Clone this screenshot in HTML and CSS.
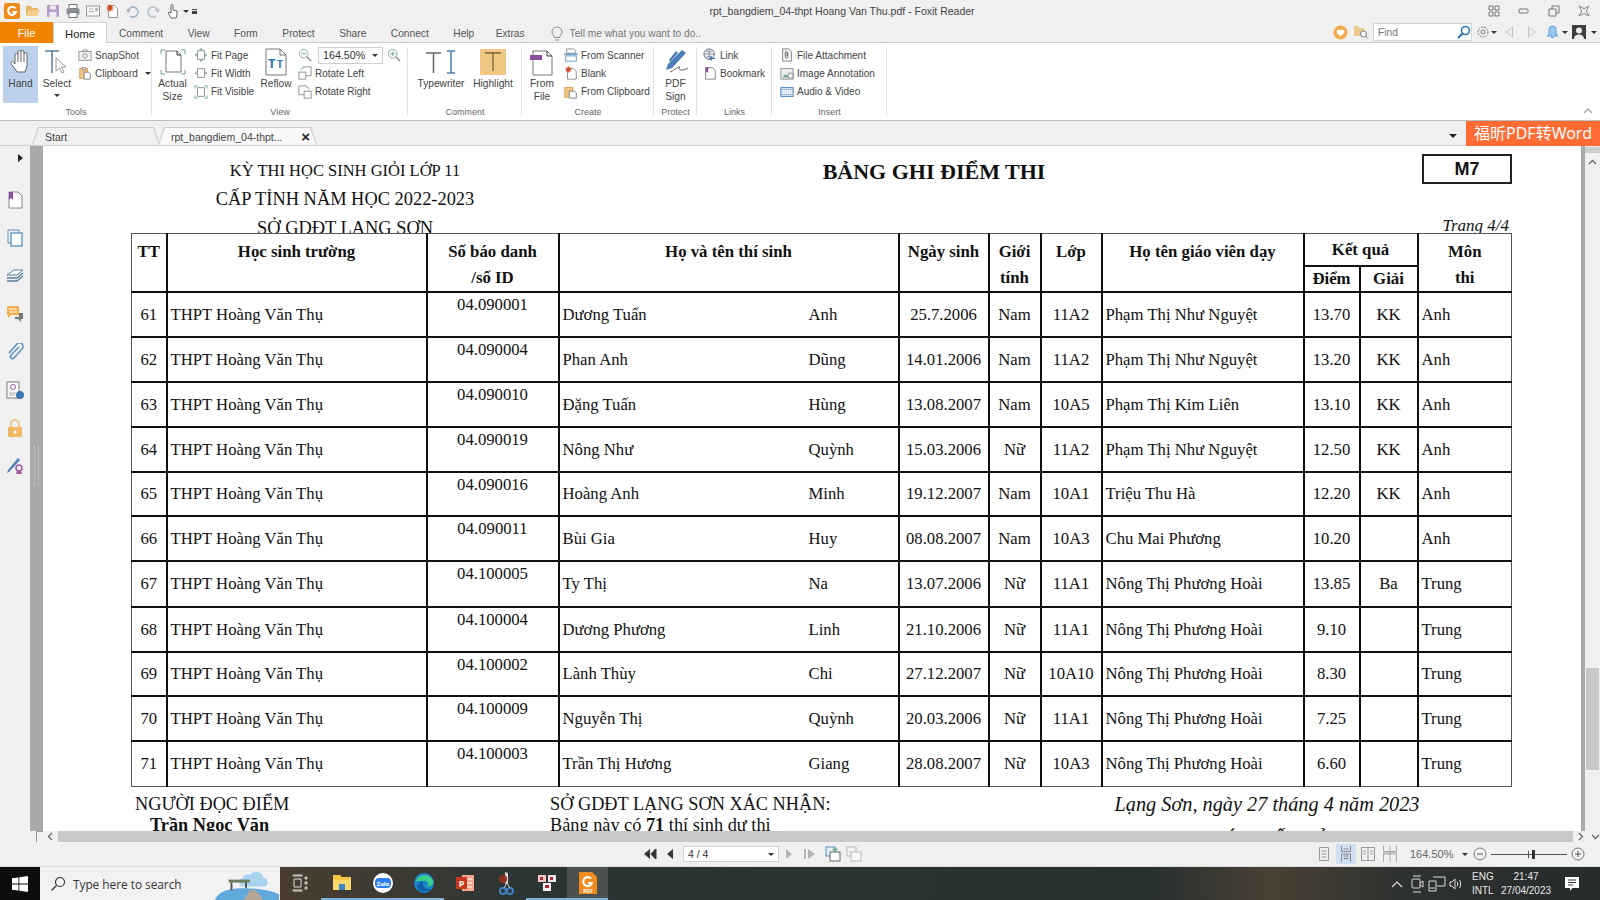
FILE: index.html
```html
<!DOCTYPE html>
<html lang="vi">
<head>
    <meta charset="UTF-8">
    <title>rpt_bangdiem_04-thpt Hoang Van Thu.pdf - Foxit Reader</title>
    <link rel="stylesheet" href="styles.css">
</head>
<body>

    <!-- Title bar -->
    <header class="titlebar">
        <div class="quick">
            <span class="q q-logo"><svg width="18" height="18" viewBox="0 0 18 18"><rect x="1" y="1" width="16" height="16" rx="2" fill="#f08a1d"/><path d="M12.5 6.5A4 4 0 1 0 13 10H9.5" fill="none" stroke="#fff" stroke-width="2.2"/></svg></span>
            <span class="q"><svg width="16" height="16" viewBox="0 0 16 16"><path d="M1 3h5l1 2h6v2H4L1 13z" fill="#e8b765"/><path d="M4 7h11l-3 6H1z" fill="#f3cf8f"/></svg></span>
            <span class="q"><svg width="16" height="16" viewBox="0 0 16 16"><rect x="2" y="2" width="12" height="12" rx="1" fill="#b79ac9"/><rect x="5" y="2.5" width="6" height="4" fill="#efe9f3"/><rect x="4.5" y="9" width="7" height="5" fill="#efe9f3"/></svg></span>
            <span class="q"><svg width="16" height="16" viewBox="0 0 16 16"><rect x="4" y="1.5" width="8" height="4" fill="#fff" stroke="#777"/><rect x="1.5" y="5.5" width="13" height="6" rx="1" fill="#8a8f96"/><rect x="4" y="9.5" width="8" height="5" fill="#fff" stroke="#777"/></svg></span>
            <span class="q"><svg width="16" height="16" viewBox="0 0 16 16"><rect x="1.5" y="3" width="13" height="10" fill="#f7f7f7" stroke="#999"/><path d="M4 6h4M4 8.5h5" stroke="#aaa"/><rect x="10" y="5" width="3" height="3" fill="#b9b9b9"/></svg></span>
            <span class="q"><svg width="16" height="16" viewBox="0 0 16 16"><path d="M3.5 2.5h6l3 3v9h-9z" fill="#fff" stroke="#999"/><path d="M5 1l1 2 2-1-1 2 2 1-2 1 1 2-2-1-1 2-1-2-2 1 1-2-2-1 2-1-1-2 2 1z" fill="#d8482b"/></svg></span>
            <span class="q"><svg width="16" height="16" viewBox="0 0 16 16"><path d="M3 9a5 5 0 1 1 2 4" fill="none" stroke="#a9b6c6" stroke-width="1.6"/><path d="M1 6l2 4 3-3z" fill="#a9b6c6"/></svg></span>
            <span class="q"><svg width="16" height="16" viewBox="0 0 16 16"><path d="M13 9a5 5 0 1 0-2 4" fill="none" stroke="#b9c3cf" stroke-width="1.6"/><path d="M15 6l-2 4-3-3z" fill="#b9c3cf"/></svg></span>
            <span class="q"><svg width="16" height="16" viewBox="0 0 16 16"><path d="M6 8V2.5a1 1 0 0 1 2 0V7l4 1v4l-1 3H6L3 10l1-1 2 1z" fill="#fff" stroke="#666"/></svg></span>
            <span class="caret"></span>
            <span class="qmore"></span>
        </div>
        <div class="doc-title">rpt_bangdiem_04-thpt Hoang Van Thu.pdf - Foxit Reader</div>
        <div class="winbtns">
            <svg width="14" height="14" viewBox="0 0 14 14"><path d="M2 2h4v4H2zM8 2h4v4H8zM2 8h4v4H2zM8 8h4v4H8z" fill="none" stroke="#777"/></svg>
            <svg width="14" height="14" viewBox="0 0 14 14"><rect x="2" y="5" width="9" height="4" rx="1" fill="none" stroke="#777"/></svg>
            <svg width="14" height="14" viewBox="0 0 14 14"><path d="M2 5h7v7H2zM5 5V2h7v7H9" fill="none" stroke="#777"/></svg>
            <svg width="14" height="14" viewBox="0 0 14 14"><path d="M2 2l4 2 1 1 1-1 4-2-2 4-1 1 1 1 2 4-4-2-1-1-1 1-4 2 2-4 1-1-1-1z" fill="none" stroke="#888"/></svg>
        </div>
    </header>

    <!-- Menu tabs -->
    <nav class="menubar">
        <a class="m-file">File</a>
        <a class="m-home">Home</a>
        <a class="m-item">Comment</a>
        <a class="m-item">View</a>
        <a class="m-item">Form</a>
        <a class="m-item">Protect</a>
        <a class="m-item">Share</a>
        <a class="m-item">Connect</a>
        <a class="m-item">Help</a>
        <a class="m-item m-extras">Extras</a>
        <span class="tell">
            <svg width="14" height="16" viewBox="0 0 14 16"><path d="M4.500 11.500C4 9 2 8.500 2 6a5 5 0 0 1 10 0c0 2.500-2 3-2.500 5.500zM5 14h4" fill="none" stroke="#888"/></svg>
            Tell me what you want to do..
        </span>
        <div class="menu-right">
            <svg class="mr-heart" width="15" height="15" viewBox="0 0 15 15"><circle cx="7.500" cy="7.500" r="7" fill="#f0ab4a"/><path d="M7.500 11.500L4 8a2 2 0 0 1 3.500-2.500A2 2 0 0 1 11 8z" fill="#fff"/></svg>
            <svg class="mr-folder" width="16" height="16" viewBox="0 0 16 16"><path d="M1 2h4l1 2h5v8H1z" fill="#ecc98e"/><circle cx="10.500" cy="10" r="3" fill="#fff" stroke="#777"/><path d="M12.500 12l2.500 2.500" stroke="#777"/></svg>
            <div class="find">Find<svg width="15" height="15" viewBox="0 0 15 15"><circle cx="9.500" cy="5.500" r="4" fill="none" stroke="#2c78b8" stroke-width="1.600"/><path d="M6.500 8.500L2 13" stroke="#2c78b8" stroke-width="2.200"/></svg></div>
            <svg class="mr-gear" width="14" height="14" viewBox="0 0 14 14"><circle cx="7" cy="7" r="5" fill="none" stroke="#777" stroke-dasharray="2 1"/><circle cx="7" cy="7" r="2" fill="none" stroke="#777"/></svg>
            <span class="caret"></span>
            <svg class="mr-prev" width="9" height="12" viewBox="0 0 9 12"><path d="M7.500 1v10L1 6z" fill="none" stroke="#c4c4c4"/></svg>
            <svg class="mr-next" width="9" height="12" viewBox="0 0 9 12"><path d="M1.500 1v10L8 6z" fill="none" stroke="#c4c4c4"/></svg>
            <svg class="mr-bell" width="13" height="14" viewBox="0 0 13 14"><path d="M6.500 1a3.500 3.500 0 0 0-3.500 3.500V9l-2 2h11l-2-2V4.500A3.500 3.500 0 0 0 6.500 1z" fill="#9cc7ec" stroke="#5a9bd4"/><path d="M5 12.500h3" stroke="#5a9bd4"/></svg>
            <span class="caret"></span>
            <svg class="mr-user" width="14" height="14" viewBox="0 0 14 14"><rect width="14" height="14" fill="#3d3d3d"/><circle cx="7" cy="5.500" r="3" fill="#eee"/><path d="M2 14c0-3 2-4.500 5-4.500s5 1.500 5 4.500z" fill="#eee"/></svg>
            <span class="caret"></span>
        </div>
    </nav>

    <!-- Ribbon -->
    <section class="ribbon">
        <div class="group g-tools">
            <div class="g-body">
                <div class="big big-hand">
                    <svg width="26" height="28" viewBox="0 0 26 28"><path d="M7 16V7a1.500 1.500 0 0 1 3 0V4a1.500 1.500 0 0 1 3 0v0a1.500 1.500 0 0 1 3 0v2a1.500 1.500 0 0 1 3 0v12l-2 6H9L3 15.500a1.500 1.500 0 0 1 2.500-1.500z" fill="#fff" stroke="#666"/><path d="M10 7v7M13 4v10M16 5v9" stroke="#666"/></svg>
                    <span>Hand</span>
                </div>
                <div class="big big-select">
                    <svg width="28" height="28" viewBox="0 0 28 28"><path d="M2 3h14M9 3v22" stroke="#5a7d9a" stroke-width="1.500"/><path d="M13 10v13l3.500-3 2.500 5 2-1-2.500-5H23z" fill="#fff" stroke="#999"/></svg>
                    <span>Select</span>
                    <i class="caret"></i>
                </div>
                <div class="col col-tools">
                    <div class="small"><svg viewBox="0 0 16 16"><rect x="1" y="4" width="14" height="10" fill="#f2f2f2" stroke="#888"/><path d="M5 4l1-2h4l1 2" fill="none" stroke="#888"/><circle cx="8" cy="9" r="2.500" fill="none" stroke="#888"/></svg>SnapShot</div>
                    <div class="small"><svg viewBox="0 0 16 16"><rect x="2" y="3" width="9" height="11" fill="#f0c686" stroke="#d69a3d"/><rect x="5" y="1.500" width="3" height="3" fill="#fff" stroke="#888"/><path d="M7 7h5l2 2v6H7z" fill="#fff" stroke="#777"/></svg>Clipboard<i class="caret caret-gap"></i></div>
                </div>
            </div>
            <div class="g-label">Tools</div>
        </div>

        <div class="group g-view">
            <div class="g-body">
                <div class="big big-actual">
                    <svg width="30" height="28" viewBox="0 0 30 28"><path d="M8 3h11l4 4v17H8z" fill="#fff" stroke="#777"/><path d="M19 3v4h4" fill="none" stroke="#333"/><path d="M3 6V2h4M27 6V2h-4M3 22v4h4M27 22v4h-4" fill="none" stroke="#6aa68a"/></svg>
                    <span>Actual<br>Size</span>
                </div>
                <div class="col col-fit">
                    <div class="small"><svg viewBox="0 0 16 16"><path d="M4 3h8v10H4z" fill="#fff" stroke="#888"/><path d="M8 0l2 2H6zM8 16l-2-2h4zM1 8l2-2v4zM15 8l-2 2V6z" fill="#6aa68a"/></svg>Fit Page</div>
                    <div class="small"><svg viewBox="0 0 16 16"><path d="M4 3h8v10H4z" fill="#fff" stroke="#888"/><path d="M1 8l2-2v4zM15 8l-2 2V6z" fill="#6aa68a"/></svg>Fit Width</div>
                    <div class="small"><svg viewBox="0 0 16 16"><path d="M4 3h8v10H4z" fill="#fff" stroke="#888"/><path d="M1 4V1h3M15 4V1h-3M1 12v3h3M15 12v3h-3" fill="none" stroke="#6aa68a"/></svg>Fit Visible</div>
                </div>
                <div class="big big-reflow">
                    <svg width="26" height="28" viewBox="0 0 26 28"><path d="M3 1h14l6 6v20H3z" fill="#fff" stroke="#777"/><path d="M17 1v6h6" fill="none" stroke="#777"/><text x="5" y="20" class="ic-t">T</text><text x="14" y="20" class="ic-t ic-t2">T</text></svg>
                    <span>Reflow</span>
                </div>
                <div class="col col-zoom">
                    <div class="zoomrow">
                        <svg viewBox="0 0 16 16"><circle cx="6.500" cy="6.500" r="5" fill="#f4f8f4" stroke="#8da89a"/><path d="M4 6.500h5" stroke="#6aa68a"/><path d="M10 10l5 5" stroke="#8a8a8a" stroke-width="1.500"/></svg>
                        <div class="combo">164.50%<i class="caret"></i></div>
                        <svg viewBox="0 0 16 16"><circle cx="6.500" cy="6.500" r="5" fill="#f4f8f4" stroke="#8da89a"/><path d="M4 6.500h5M6.500 4v5" stroke="#6aa68a"/><path d="M10 10l5 5" stroke="#8a8a8a" stroke-width="1.500"/></svg>
                    </div>
                    <div class="small"><svg viewBox="0 0 16 16"><path d="M6 1h9v10H9" fill="#fff" stroke="#888"/><rect x="1" y="7" width="8" height="8" fill="#fff" stroke="#888"/><path d="M3 5a4 4 0 0 1 4-3" fill="none" stroke="#6aa68a"/></svg>Rotate Left</div>
                    <div class="small"><svg viewBox="0 0 16 16"><path d="M10 1H1v10h6" fill="#fff" stroke="#888"/><rect x="7" y="7" width="8" height="8" fill="#fff" stroke="#888"/><path d="M13 5a4 4 0 0 0-4-3" fill="none" stroke="#6aa68a"/></svg>Rotate Right</div>
                </div>
            </div>
            <div class="g-label">View</div>
        </div>

        <div class="group g-comment">
            <div class="g-body">
                <div class="big big-type">
                    <svg width="36" height="28" viewBox="0 0 36 28"><path d="M3 5h15M10.500 5v20" stroke="#666" stroke-width="1.500"/><path d="M24 3h8M24 25h8M28 3v22" stroke="#4a7fb5" stroke-width="1.500"/></svg>
                    <span>Typewriter</span>
                </div>
                <div class="big big-high">
                    <svg width="28" height="28" viewBox="0 0 28 28"><rect x="1" y="1" width="26" height="26" fill="#f0c683"/><path d="M6 5h16M14 5v18" stroke="#7a6238" stroke-width="1.300"/></svg>
                    <span>Highlight</span>
                </div>
            </div>
            <div class="g-label">Comment</div>
        </div>

        <div class="group g-create">
            <div class="g-body">
                <div class="big big-file">
                    <svg width="24" height="28" viewBox="0 0 24 28"><path d="M3 3h14l5 5v19H3z" fill="#fff" stroke="#777"/><path d="M17 3v5h5" fill="none" stroke="#333"/><rect x="0" y="7" width="12" height="5" fill="#8a4fa0"/></svg>
                    <span>From<br>File</span>
                </div>
                <div class="col col-create">
                    <div class="small"><svg viewBox="0 0 16 16"><path d="M4 1h7l2 2v3H3V1z" fill="#fff" stroke="#888"/><path d="M0 7h16" stroke="#5a8fc0" stroke-width="1.500"/><rect x="2" y="9" width="12" height="6" fill="#fff" stroke="#5a8fc0"/></svg>From Scanner</div>
                    <div class="small"><svg viewBox="0 0 16 16"><path d="M4 3h7l3 3v9H4z" fill="#fff" stroke="#888"/><path d="M5 0l1 2 2-1-1 2 2 1-2 1 1 2-2-1-1 2-1-2-2 1 1-2-2-1 2-1-1-2 2 1z" fill="#d8482b"/></svg>Blank</div>
                    <div class="small"><svg viewBox="0 0 16 16"><rect x="1" y="3" width="9" height="11" fill="#f0c686" stroke="#d69a3d"/><path d="M6 7h6l2 2v6H6z" fill="#fff" stroke="#777"/></svg>From Clipboard</div>
                </div>
            </div>
            <div class="g-label">Create</div>
        </div>

        <div class="group g-protect">
            <div class="g-body">
                <div class="big big-sign">
                    <svg width="28" height="28" viewBox="0 0 28 28"><path d="M20 2l4 3L10 20l-6 2 2-6z" fill="#4a7fb5"/><path d="M14 3l2 2-8 9-1-2z" fill="#4a7fb5"/><path d="M8 24c4-1 6-5 10-5-2 2-1 3 2 3s4-1 6-2" fill="none" stroke="#666"/></svg>
                    <span>PDF<br>Sign</span>
                </div>
            </div>
            <div class="g-label">Protect</div>
        </div>

        <div class="group g-links">
            <div class="g-body">
                <div class="col">
                    <div class="small"><svg viewBox="0 0 16 16"><circle cx="7" cy="7" r="6" fill="#e8eef4" stroke="#667"/><path d="M1 7h12M7 1v12M3 3c3 2 5 2 8 0M3 11c3-2 5-2 8 0" fill="none" stroke="#667" stroke-width=".7"/><path d="M8 12h6M10 10l-2 2 2 2" fill="none" stroke="#3b78b5" stroke-width="1.300"/></svg>Link</div>
                    <div class="small"><svg viewBox="0 0 16 16"><path d="M3 2h8l3 3v10H3z" fill="#fff" stroke="#777"/><path d="M3 1h3v7L4.500 6.500 3 8z" fill="#8a4fa0"/></svg>Bookmark</div>
                </div>
            </div>
            <div class="g-label">Links</div>
        </div>

        <div class="group g-insert">
            <div class="g-body">
                <div class="col">
                    <div class="small"><svg viewBox="0 0 16 16"><path d="M3 1h7l3 3v11H3z" fill="#f6f6f6" stroke="#777"/><path d="M9 5v5a1.500 1.500 0 0 1-3 0V5a1 1 0 0 1 2 0v4" fill="none" stroke="#555"/></svg>File Attachment</div>
                    <div class="small"><svg viewBox="0 0 16 16"><rect x="1" y="3" width="14" height="12" fill="#e8eef0" stroke="#888"/><path d="M3 13l3-4 2 2 2-3 3 5z" fill="#6aa68a"/><circle cx="12" cy="11" r="3" fill="#fff" stroke="#777"/></svg>Image Annotation</div>
                    <div class="small"><svg viewBox="0 0 16 16"><rect x="1" y="3" width="14" height="10" fill="#e4edf5" stroke="#3b78b5"/><path d="M1 5h14M1 11h14" stroke="#3b78b5" stroke-dasharray="1 1"/></svg>Audio &amp; Video</div>
                </div>
            </div>
            <div class="g-label">Insert</div>
        </div>

        <svg class="ribbon-up" width="10" height="8" viewBox="0 0 10 8"><path d="M1 6l4-4 4 4" fill="none" stroke="#aaa" stroke-width="1.500"/></svg>
    </section>

    <!-- Document tabs -->
    <div class="tabrow">
        <div class="tab tab-start"><span>Start</span></div>
        <div class="tab tab-doc"><span>rpt_bangdiem_04-thpt...</span><b class="tab-x">×</b></div>
        <i class="tabs-drop"></i>
        <div class="promo">福昕PDF转Word</div>
    </div>

    <!-- Main area -->
    <main class="workspace">
        <aside class="sidebar">
            <i class="side-arrow"></i>
            <svg width="18" height="18" viewBox="0 0 18 18"><path d="M3 1h9l4 4v12H3z" fill="#fff" stroke="#888"/><path d="M3 1h4v8L5 7 3 9z" fill="#8a4fa0"/></svg>
            <svg width="18" height="18" viewBox="0 0 18 18"><path d="M2 1h11v3" fill="none" stroke="#5a8fc0"/><path d="M2 1v13h3" fill="none" stroke="#5a8fc0"/><rect x="5" y="4" width="11" height="13" fill="#fff" stroke="#5a8fc0" stroke-width="1.300"/></svg>
            <svg width="18" height="18" viewBox="0 0 18 18"><path d="M1 8l7-5h9l-6 5z" fill="#fff" stroke="#5a7d9a"/><path d="M1 11h10l6-5M1 14h10l6-5" fill="none" stroke="#5a7d9a" stroke-width="1.300"/></svg>
            <svg width="18" height="18" viewBox="0 0 18 18"><path d="M1 1h12v9H5l-3 3v-3H1z" fill="#f0b04f"/><path d="M3 4h8M3 7h8" stroke="#fff"/><path d="M13 8h4v6h-2v3l-3-3H9v-2h4z" fill="#777"/></svg>
            <svg width="18" height="18" viewBox="0 0 18 18"><path d="M13 4L5 12a2 2 0 0 0 3 3l8-9a3.500 3.500 0 0 0-5-5L3 10a5 5 0 0 0 0 0" fill="none" stroke="#5a8fc0" stroke-width="1.500"/></svg>
            <svg width="18" height="18" viewBox="0 0 18 18"><rect x="1" y="1" width="12" height="16" fill="#fff" stroke="#777"/><circle cx="7" cy="6" r="2.500" fill="none" stroke="#a0569b"/><path d="M3 12h7M3 14h6" stroke="#aaa"/><circle cx="14" cy="14" r="4" fill="#3b78b5"/></svg>
            <svg width="18" height="18" viewBox="0 0 18 18"><path d="M5 8V5a4 4 0 0 1 8 0v3" fill="none" stroke="#f0c078" stroke-width="1.600"/><rect x="2" y="8" width="14" height="10" rx="1" fill="#f0b860"/><circle cx="9" cy="13" r="1.500" fill="#fff"/></svg>
            <svg width="18" height="18" viewBox="0 0 18 18"><path d="M12 1l2 2-11 12-2 1 1-3z" fill="#4a7fb5"/><circle cx="13" cy="11" r="3" fill="none" stroke="#a0569b" stroke-width="1.500"/><path d="M11 14l-1 3h6l-1-3" fill="#a0569b"/></svg>
        </aside>
        <div class="strip strip-left"><span class="grip"></span></div>

        <div class="page">
            <div class="doc-head">
                <div class="head-left">
                    <div class="exam-name">KỲ THI HỌC SINH GIỎI LỚP 11</div>
                    <div>CẤP TỈNH NĂM HỌC 2022-2023</div>
                    <div>SỞ GDĐT LẠNG SƠN</div>
                </div>
                <h1 class="head-title">BẢNG GHI ĐIỂM THI</h1>
                <div class="head-right">
                    <div class="code">M7</div>
                    <div class="pageno">Trang 4/4</div>
                </div>
            </div>

            <table class="scores">
                <colgroup>
                    <col class="c-tt"><col class="c-school"><col class="c-id"><col class="c-name"><col class="c-dob">
                    <col class="c-sex"><col class="c-class"><col class="c-teacher"><col class="c-score"><col class="c-prize"><col class="c-sub">
                </colgroup>
                <thead>
                    <tr class="h1">
                        <th rowspan="2">TT</th>
                        <th rowspan="2">Học sinh trường</th>
                        <th rowspan="2">Số báo danh<br>/số ID</th>
                        <th rowspan="2">Họ và tên thí sinh</th>
                        <th rowspan="2">Ngày sinh</th>
                        <th rowspan="2">Giới<br>tính</th>
                        <th rowspan="2">Lớp</th>
                        <th rowspan="2">Họ tên giáo viên dạy</th>
                        <th colspan="2" class="th-mid">Kết quả</th>
                        <th rowspan="2">Môn<br>thi</th>
                    </tr>
                    <tr class="h2">
                        <th class="th-mid">Điểm</th>
                        <th class="th-mid">Giải</th>
                    </tr>
                </thead>
                <tbody>
                    <tr><td>61</td><td class="l">THPT Hoàng Văn Thụ</td><td class="sbd">04.090001</td><td class="l"><div class="fullname"><span>Dương Tuấn</span><span>Anh</span></div></td><td>25.7.2006</td><td>Nam</td><td>11A2</td><td class="l">Phạm Thị Như Nguyệt</td><td>13.70</td><td>KK</td><td class="l">Anh</td></tr>
                    <tr><td>62</td><td class="l">THPT Hoàng Văn Thụ</td><td class="sbd">04.090004</td><td class="l"><div class="fullname"><span>Phan Anh</span><span>Dũng</span></div></td><td>14.01.2006</td><td>Nam</td><td>11A2</td><td class="l">Phạm Thị Như Nguyệt</td><td>13.20</td><td>KK</td><td class="l">Anh</td></tr>
                    <tr><td>63</td><td class="l">THPT Hoàng Văn Thụ</td><td class="sbd">04.090010</td><td class="l"><div class="fullname"><span>Đặng Tuấn</span><span>Hùng</span></div></td><td>13.08.2007</td><td>Nam</td><td>10A5</td><td class="l">Phạm Thị Kim Liên</td><td>13.10</td><td>KK</td><td class="l">Anh</td></tr>
                    <tr><td>64</td><td class="l">THPT Hoàng Văn Thụ</td><td class="sbd">04.090019</td><td class="l"><div class="fullname"><span>Nông Như</span><span>Quỳnh</span></div></td><td>15.03.2006</td><td>Nữ</td><td>11A2</td><td class="l">Phạm Thị Như Nguyệt</td><td>12.50</td><td>KK</td><td class="l">Anh</td></tr>
                    <tr><td>65</td><td class="l">THPT Hoàng Văn Thụ</td><td class="sbd">04.090016</td><td class="l"><div class="fullname"><span>Hoàng Anh</span><span>Minh</span></div></td><td>19.12.2007</td><td>Nam</td><td>10A1</td><td class="l">Triệu Thu Hà</td><td>12.20</td><td>KK</td><td class="l">Anh</td></tr>
                    <tr><td>66</td><td class="l">THPT Hoàng Văn Thụ</td><td class="sbd">04.090011</td><td class="l"><div class="fullname"><span>Bùi Gia</span><span>Huy</span></div></td><td>08.08.2007</td><td>Nam</td><td>10A3</td><td class="l">Chu Mai Phương</td><td>10.20</td><td></td><td class="l">Anh</td></tr>
                    <tr><td>67</td><td class="l">THPT Hoàng Văn Thụ</td><td class="sbd">04.100005</td><td class="l"><div class="fullname"><span>Ty Thị</span><span>Na</span></div></td><td>13.07.2006</td><td>Nữ</td><td>11A1</td><td class="l">Nông Thị Phương Hoài</td><td>13.85</td><td>Ba</td><td class="l">Trung</td></tr>
                    <tr><td>68</td><td class="l">THPT Hoàng Văn Thụ</td><td class="sbd">04.100004</td><td class="l"><div class="fullname"><span>Dương Phương</span><span>Linh</span></div></td><td>21.10.2006</td><td>Nữ</td><td>11A1</td><td class="l">Nông Thị Phương Hoài</td><td>9.10</td><td></td><td class="l">Trung</td></tr>
                    <tr><td>69</td><td class="l">THPT Hoàng Văn Thụ</td><td class="sbd">04.100002</td><td class="l"><div class="fullname"><span>Lành Thùy</span><span>Chi</span></div></td><td>27.12.2007</td><td>Nữ</td><td>10A10</td><td class="l">Nông Thị Phương Hoài</td><td>8.30</td><td></td><td class="l">Trung</td></tr>
                    <tr><td>70</td><td class="l">THPT Hoàng Văn Thụ</td><td class="sbd">04.100009</td><td class="l"><div class="fullname"><span>Nguyễn Thị</span><span>Quỳnh</span></div></td><td>20.03.2006</td><td>Nữ</td><td>11A1</td><td class="l">Nông Thị Phương Hoài</td><td>7.25</td><td></td><td class="l">Trung</td></tr>
                    <tr><td>71</td><td class="l">THPT Hoàng Văn Thụ</td><td class="sbd">04.100003</td><td class="l"><div class="fullname"><span>Trần Thị Hương</span><span>Giang</span></div></td><td>28.08.2007</td><td>Nữ</td><td>10A3</td><td class="l">Nông Thị Phương Hoài</td><td>6.60</td><td></td><td class="l">Trung</td></tr>
                </tbody>
            </table>

            <div class="doc-foot">
                <div>
                    <div>NGƯỜI ĐỌC ĐIỂM</div>
                    <div class="reader">Trần Ngọc Văn</div>
                </div>
                <div>
                    <div>SỞ GDĐT LẠNG SƠN XÁC NHẬN:</div>
                    <div>Bảng này có <b>71</b> thí sinh dự thi</div>
                </div>
                <div class="foot-right">
                    <div class="foot-date">Lạng Sơn, ngày 27 tháng 4 năm 2023</div>
                    <div class="foot-sign">GIÁM ĐỐC SỞ</div>
                </div>
            </div>
        </div>

        <div class="strip strip-right"></div>
        <div class="vscroll">
            <span class="v-split"></span>
            <svg class="v-up" width="9" height="6" viewBox="0 0 9 6"><path d="M1 5l3.500-3.500L8 5" fill="none" stroke="#666" stroke-width="1.300"/></svg>
            <span class="v-thumb"></span>
        </div>
    </main>

    <!-- Horizontal scrollbar -->
    <div class="hscroll">
        <span class="corner"></span>
        <svg width="8" height="9" viewBox="0 0 8 9"><path d="M6 1L2.500 4.500 6 8" fill="none" stroke="#666" stroke-width="1.300"/></svg>
        <span class="h-thumb"></span>
        <svg width="8" height="9" viewBox="0 0 8 9"><path d="M2 1l3.500 3.500L2 8" fill="none" stroke="#666" stroke-width="1.300"/></svg>
        <svg class="v-down" width="9" height="6" viewBox="0 0 9 6"><path d="M1 1l3.500 3.500L8 1" fill="none" stroke="#666" stroke-width="1.300"/></svg>
    </div>

    <!-- Status bar -->
    <footer class="status">
        <div class="pager">
            <svg width="14" height="12" viewBox="0 0 14 12"><path d="M7 1v10L1 6zM12 1v10L7.500 6z" fill="#333"/><rect x="12" y="1" width="1.500" height="10" fill="#333"/></svg>
            <svg width="8" height="12" viewBox="0 0 8 12"><path d="M7 1v10L1 6z" fill="#333"/></svg>
            <div class="pagebox">4 / 4<i class="caret"></i></div>
            <svg width="8" height="12" viewBox="0 0 8 12"><path d="M1 1v10l6-5z" fill="#b4b4b4"/></svg>
            <svg width="12" height="12" viewBox="0 0 12 12"><rect x="0" y="1" width="2" height="10" fill="#b4b4b4"/><path d="M4 1v10l7-5z" fill="#b4b4b4"/></svg>
            <svg width="16" height="16" viewBox="0 0 16 16"><rect x="1" y="1" width="9" height="9" fill="#e4edf5" stroke="#5a8fc0"/><rect x="5" y="6" width="10" height="9" fill="#fff" stroke="#666"/><path d="M10 1v5M7.500 3.500h5" stroke="#6aa68a" stroke-width="1.300"/></svg>
            <svg width="16" height="16" viewBox="0 0 16 16"><rect x="1" y="1" width="9" height="9" fill="#f2f2f2" stroke="#bbb"/><rect x="5" y="6" width="10" height="9" fill="#f8f8f8" stroke="#bbb"/></svg>
        </div>
        <div class="viewctl">
            <span class="vb"><svg width="10" height="14" viewBox="0 0 10 14"><path d="M.5.500h9v13h-9zM2.500 4h5M2.500 7h5M2.500 10h5" fill="none" stroke="#999"/></svg></span>
            <span class="vb vb-on"><svg width="10" height="16" viewBox="0 0 10 16"><path d="M.5 0v5.500h9V0M.5 16V8h9v8M2.500 3h5M2.500 10h5M2.500 12.500h5" fill="none" stroke="#888"/></svg></span>
            <span class="vb"><svg width="14" height="14" viewBox="0 0 14 14"><path d="M.5.500h13v13H.5zM7 .5v13M2 4h3M2 7h3M9 4h3M9 7h3" fill="none" stroke="#999"/></svg></span>
            <span class="vb"><svg width="14" height="16" viewBox="0 0 14 16"><path d="M.5 0v5.500h13V0M.5 16V8h13v8M7 0v16M0 6.800h14" fill="none" stroke="#aaa"/></svg></span>
            <span class="zoomval">164.50%</span>
            <i class="caret"></i>
            <svg width="14" height="14" viewBox="0 0 14 14"><circle cx="7" cy="7" r="6" fill="none" stroke="#777"/><path d="M4 7h6" stroke="#555"/></svg>
            <div class="slider"><i class="tick"></i><i class="thumb"></i></div>
            <svg width="14" height="14" viewBox="0 0 14 14"><circle cx="7" cy="7" r="6" fill="none" stroke="#777"/><path d="M4 7h6M7 4v6" stroke="#555"/></svg>
        </div>
    </footer>

    <!-- Windows taskbar -->
    <div class="taskbar">
        <div class="start"><svg width="16" height="16" viewBox="0 0 16 16"><path d="M0 2.300l6.500-.9v6.200H0zM7.300 1.300L16 0v7.600H7.300zM0 8.400h6.500v6.200L0 13.700zM7.300 8.400H16V16l-8.700-1.300z" fill="#fff"/></svg></div>
        <div class="search">
            <svg width="16" height="16" viewBox="0 0 16 16"><circle cx="10" cy="6" r="4.500" fill="none" stroke="#333" stroke-width="1.200"/><path d="M6.500 9.500L1.500 14.500" stroke="#333" stroke-width="1.300"/></svg>
            <span>Type here to search</span>
            <svg class="search-art" width="66" height="33" viewBox="0 0 66 34"><path d="M28 12a6 6 0 0 1 8-4 8 8 0 0 1 14 3 5 5 0 0 1 2 9H30a4 4 0 0 1-2-8z" fill="#a9d3ee"/><path d="M0 34c4-10 16-12 30-12s28 2 36 6v6z" fill="#5fa9dd"/><path d="M14 13h22v3H14z" fill="#6a7d5c"/><path d="M17 16v8M32 16v6" stroke="#555" stroke-width="2"/><path d="M30 34l6-10h6l8 10z" fill="#b5a795"/></svg>
        </div>
        <div class="tb-icons">
            <span class="tb"><svg width="18" height="18" viewBox="0 0 18 18"><path d="M2 1h9v1H2zM3 5h7v8H3zM2 16h9v1H2zM14 3h2v2h-2zM14 8h2v2h-2zM14 13h2v2h-2z" fill="none" stroke="#ddd"/></svg></span>
            <span class="tb tb-run"><svg width="20" height="20" viewBox="0 0 20 20"><path d="M1 2h7l2 2h9v13H1z" fill="#f5c646"/><rect x="1" y="7" width="18" height="10" fill="#f9d96a"/><rect x="7" y="11" width="6" height="6" fill="#3b86c8"/></svg></span>
            <span class="tb tb-run"><svg width="22" height="22" viewBox="0 0 22 22"><circle cx="11" cy="11" r="10" fill="#fff"/><rect x="3" y="6" width="16" height="10" rx="4" fill="#2d7ff0"/><text x="11" y="13.500" class="ic-zalo">Zalo</text></svg></span>
            <span class="tb tb-run"><svg width="22" height="22" viewBox="0 0 22 22"><circle cx="11" cy="11" r="10" fill="#1a86c9"/><path d="M3 9c2-7 14-8 17 0 1 4-3 6-6 5 2-1 2-4-1-5-5-1-8 1-10 0z" fill="#3ccf8a"/><path d="M4 15c1-4 4-6 6-5-1 4 2 8 8 7-4 4-12 3-14-2z" fill="#0f5ea8"/></svg></span>
            <span class="tb"><svg width="20" height="20" viewBox="0 0 20 20"><rect x="7" y="2" width="12" height="16" fill="#f3a58f"/><path d="M10 6h7M10 10h7M10 14h7" stroke="#fff"/><rect x="1" y="4" width="11" height="12" fill="#c8391e"/><text x="6.500" y="13.500" class="ic-ppt">P</text></svg></span>
            <span class="tb"><svg width="20" height="24" viewBox="0 0 20 24"><path d="M9 1l3 1v10l-3 1z" fill="#d9d9d9"/><circle cx="7" cy="8" r="4" fill="#8c2f22"/><circle cx="7" cy="20" r="3" fill="none" stroke="#3d7fc4" stroke-width="2"/><circle cx="14" cy="20" r="3" fill="none" stroke="#3d7fc4" stroke-width="2"/><path d="M8 17l3-5 3 5" fill="none" stroke="#cfcfcf"/></svg></span>
            <span class="tb tb-run"><svg width="20" height="20" viewBox="0 0 20 20"><path d="M1 2h8v7H1z" fill="#f0c8c8"/><path d="M11 2h8v7h-8z" fill="#e8e8e8"/><path d="M6 10h8v8H6z" fill="#f4f4f4"/><rect x="3" y="4" width="3" height="3" fill="#b8232f"/><rect x="13" y="4" width="3" height="3" fill="#b8232f"/><rect x="8" y="12" width="4" height="3" fill="#b8232f"/></svg></span>
            <span class="tb tb-run tb-active"><svg width="20" height="24" viewBox="0 0 20 24"><path d="M1 1h13l5 5v17H1z" fill="#f08a1d"/><path d="M13 7.500A4.500 4.500 0 1 0 14 12h-4" fill="none" stroke="#fff" stroke-width="2.200"/><text x="10" y="21.500" class="ic-pdf">PDF</text></svg></span>
        </div>
        <div class="tray">
            <svg width="12" height="8" viewBox="0 0 12 8"><path d="M1 7l5-5 5 5" fill="none" stroke="#ddd" stroke-width="1.200"/></svg>
            <svg class="t-cam" width="14" height="18" viewBox="0 0 14 18"><path d="M3 1h8M3 17h8" stroke="#ddd"/><rect x="2" y="4" width="8" height="9" rx="1" fill="none" stroke="#ddd"/><path d="M10 8l3-2v6l-3-2" fill="none" stroke="#ddd"/></svg>
            <svg class="t-net" width="18" height="16" viewBox="0 0 18 16"><path d="M5 1h12v9H9M1 5h7v10H1zM2 12h5" fill="none" stroke="#ddd"/></svg>
            <svg class="t-spk" width="14" height="14" viewBox="0 0 14 14"><path d="M1 5h2l3-3v10L3 9H1z" fill="none" stroke="#ddd"/><path d="M8 4.500c1 1.500 1 3.500 0 5M10.500 3c1.500 2 1.500 6 0 8" fill="none" stroke="#ddd"/></svg>
            <div class="lang">ENG<br>INTL</div>
            <div class="clock">21:47<br>27/04/2023</div>
            <svg class="notif" width="16" height="16" viewBox="0 0 16 16"><path d="M1 1h14v11H8.500L6 15v-3H1z" fill="#fff"/><path d="M4 4h8M4 6.500h8M4 9h5" stroke="#333"/></svg>
        </div>
    </div>

</body>
</html>
```

FILE: styles.css
```css
/* General */
html, body {
    margin: 0;
    padding: 0;
    height: 100%;
    overflow: hidden;
}

body {
    width: 1600px;
    height: 900px;
    display: flex;
    flex-direction: column;
    background: #f0f0f0;
    font-family: "Liberation Sans", Arial, sans-serif;
    font-size: 10.2px;
    color: #444;
}

svg {
    flex: none;
    display: block;
}

.caret {
    display: inline-block;
    flex: none;
    width: 0;
    height: 0;
    border-left: 3px solid transparent;
    border-right: 3px solid transparent;
    border-top: 3px solid #333;
}

/* Title bar */
.titlebar {
    height: 22px;
    flex: none;
    display: flex;
    align-items: center;
    position: relative;
}

.quick {
    display: flex;
    align-items: center;
    padding-left: 1px;
}

.q {
    width: 20px;
    height: 20px;
    display: flex;
    align-items: center;
    justify-content: center;
}

.q-logo {
    width: 22px;
}

.qmore {
    width: 5px;
    height: 5px;
    margin-left: 3px;
    border-top: 1px solid #444;
    border-bottom: 3px solid #444;
    box-sizing: border-box;
}

.doc-title {
    position: absolute;
    left: 0;
    right: 0;
    text-align: center;
    top: 5px;
    padding-left: 84px;
    font-size: 10.5px;
}

.winbtns {
    margin-left: auto;
    display: flex;
    gap: 16px;
    padding-right: 9px;
}

/* Menu */
.menubar {
    height: 20px;
    flex: none;
    display: flex;
    align-items: center;
    border-bottom: 1px solid #c9c9c9;
    font-size: 10.2px;
}

.m-file {
    width: 53px;
    height: 21px;
    line-height: 22px;
    margin-top: 1px;
    text-align: center;
    background: #f08300;
    color: #fff;
    font-size: 11px;
}

.m-home {
    width: 54px;
    height: 22px;
    line-height: 22px;
    margin-top: 2px;
    text-align: center;
    background: #fff;
    border: 1px solid #d0d0d0;
    border-bottom: none;
    box-sizing: border-box;
    color: #222;
    font-size: 11.2px;
}

.m-item {
    margin-left: 24.5px;
    padding-top: 3px;
    color: #555;
}

.m-home + .m-item {
    margin-left: 12px;
}

.m-extras {
    margin-left: 21.5px;
}

.tell {
    margin-left: 25px;
    padding-top: 3px;
    display: flex;
    align-items: center;
    gap: 6px;
    color: #777;
}

.menu-right {
    margin-left: auto;
    display: flex;
    align-items: center;
}

.mr-heart { margin-right: 5.5px; }
.mr-folder { margin-right: 4px; }

.find {
    width: 99px;
    height: 18px;
    box-sizing: border-box;
    padding-left: 4px;
    background: #fff;
    border: 1px solid #d5d5d5;
    color: #777;
    display: flex;
    justify-content: space-between;
    align-items: center;
}

.mr-gear { margin-left: 4px; margin-right: 1px; }
.mr-prev { margin-left: 7.5px; }
.mr-next { margin-left: 13px; }
.mr-bell { margin-left: 10px; margin-right: 3.5px; }
.mr-user { margin-left: 4px; margin-right: 5px; }

.menu-right > .caret:last-child {
    margin-right: 3px;
}

/* Ribbon */
.ribbon {
    height: 77px;
    flex: none;
    display: flex;
    background: #fff;
    border-bottom: 1px solid #bdbdbd;
    position: relative;
}

.group {
    box-sizing: border-box;
    display: flex;
    flex-direction: column;
    padding-top: 3px;
    position: relative;
}

.group::after {
    content: "";
    position: absolute;
    right: 0;
    top: 4px;
    bottom: 4px;
    width: 1px;
    background: #e2e2e2;
}

.g-tools { width: 152px; }
.g-view { width: 256px; }
.g-comment { width: 114px; }
.g-create { width: 132px; }
.g-protect { width: 43px; }
.g-links { width: 75px; }
.g-insert { width: 115px; }

.g-body {
    height: 57px;
    flex: none;
    display: flex;
}

.g-label {
    height: 16px;
    line-height: 18px;
    text-align: center;
    font-size: 9px;
    color: #666;
}

.big {
    flex: none;
    display: flex;
    flex-direction: column;
    align-items: center;
    text-align: center;
    line-height: 13px;
    padding-top: 2px;
    box-sizing: border-box;
}

.big svg {
    height: 28px;
    margin-bottom: 1px;
}

.big-hand {
    width: 35px;
    height: 57px;
    margin-left: 3px;
    background: #bdd1ec;
}

.big-select {
    width: 30px;
    margin-left: 4px;
}

.big-select .caret {
    margin-top: 4px;
}

.big-actual { width: 41px; }
.big-reflow { width: 40px; }
.big-type { width: 66px; }
.big-high { width: 38px; }
.big-file { width: 40px; }
.big-sign { width: 43px; }

.col {
    flex: none;
    display: flex;
    flex-direction: column;
}

.col-tools { margin-left: 6px; }
.col-fit { width: 62px; padding-left: 1px; }
.col-zoom { margin-left: 2px; }
.col-create { margin-left: 2px; }
.g-links .col { margin-left: 6px; }
.g-insert .col { margin-left: 8px; }

.small,
.zoomrow {
    height: 18.3px;
    display: flex;
    align-items: center;
    gap: 3px;
    white-space: nowrap;
    font-size: 10px;
}

.small svg,
.zoomrow svg {
    width: 14px;
    height: 14px;
}

.zoomrow {
    gap: 4px;
}

.combo {
    width: 65px;
    height: 17px;
    margin-left: 2px;
    box-sizing: border-box;
    border: 1px solid #cfcfcf;
    padding: 0 4px;
    display: flex;
    align-items: center;
    justify-content: space-between;
    color: #333;
    font-size: 10.7px;
}

.caret-gap {
    margin-left: 4px;
}

.ic-t {
    font: bold 13px "Open Sans", sans-serif;
    fill: #2c78b8;
}

.ic-t2 {
    font-size: 10px;
}

.ic-zalo {
    font: bold 6px "Open Sans", sans-serif;
    fill: #fff;
    text-anchor: middle;
}

.ic-ppt {
    font: bold 9px "Open Sans", sans-serif;
    fill: #fff;
    text-anchor: middle;
}

.ic-pdf {
    font: bold 5px "Open Sans", sans-serif;
    fill: #fff;
    text-anchor: middle;
}

.ribbon-up {
    position: absolute;
    right: 7px;
    bottom: 5px;
}

/* Tabs */
.tabrow {
    height: 24px;
    flex: none;
    display: flex;
    align-items: stretch;
    border-bottom: 1px solid #cfcfcf;
    font-size: 10.5px;
}

.tab {
    display: flex;
    align-items: center;
    box-sizing: border-box;
    margin-top: 6px;
    padding-top: 1px;
    background: #cdcdcd;
    position: relative;
    clip-path: polygon(6px 0, calc(100% - 6px) 0, 100% 100%, 0 100%);
}

.tab::before {
    content: "";
    position: absolute;
    inset: 1px 1px 0 1px;
    background: #f0f0f0;
    clip-path: polygon(6px 0, calc(100% - 6px) 0, 100% 100%, 0 100%);
}

.tab span,
.tab b {
    position: relative;
}

.tab-start {
    width: 128px;
    margin-left: 32px;
    padding-left: 13px;
}

.tab-doc {
    width: 159px;
    margin-left: -2px;
    padding-left: 13px;
    padding-right: 7px;
}

.tab-doc::before {
    background: #f9f9f9;
}

.tab-x {
    margin-left: auto;
    font-size: 15px;
    color: #222;
}

.tabs-drop {
    margin: 13px 9px 0 auto;
    width: 0;
    height: 0;
    border-left: 4px solid transparent;
    border-right: 4px solid transparent;
    border-top: 4px solid #222;
}

.promo {
    width: 134px;
    margin-bottom: -1px;
    background: #ff6b33;
    color: #fff;
    text-align: center;
    font-family: "Noto Sans", "Noto Sans CJK SC", sans-serif;
    font-size: 16px;
    line-height: 25px;
}

/* Workspace */
.workspace {
    height: 685px;
    flex: none;
    display: flex;
    overflow: hidden;
}

.sidebar {
    width: 30px;
    flex: none;
    display: flex;
    flex-direction: column;
    align-items: center;
    gap: 20px;
    padding-top: 45px;
    box-sizing: border-box;
    position: relative;
}

.side-arrow {
    position: absolute;
    top: 8px;
    left: 18px;
    border-left: 5px solid #222;
    border-top: 4px solid transparent;
    border-bottom: 4px solid transparent;
}

.strip {
    flex: none;
    background: #a9a9a9;
}

.strip-left {
    width: 13px;
    display: flex;
    justify-content: center;
    align-items: flex-start;
}

.grip {
    width: 5px;
    height: 40px;
    margin-top: 300px;
    border-left: 1px dotted #ccc;
    border-right: 1px dotted #ccc;
    box-sizing: border-box;
}

.strip-right {
    width: 4px;
}

.page {
    flex: 1;
    background: #fff;
    padding-left: 88px;
    overflow: hidden;
    font-family: "Liberation Serif", serif;
    color: #111;
    font-size: 18.4px;
}

.doc-head {
    height: 87px;
    width: 1381px;
    overflow: hidden;
    display: grid;
    grid-template-columns: 428px 750px 203px;
    grid-template-rows: 87px;
}

.head-left {
    text-align: center;
    line-height: 29px;
    padding-top: 10px;
}

.exam-name {
    font-size: 16.5px;
}

.head-title {
    margin: 12px 0 0;
    text-align: center;
    font-size: 22px;
    font-weight: bold;
    line-height: 28px;
}

.head-right {
    display: flex;
    flex-direction: column;
    align-items: flex-end;
    justify-content: space-between;
    padding-top: 8px;
}

.code {
    width: 90px;
    height: 30px;
    box-sizing: border-box;
    border: 2px solid #222;
    text-align: center;
    line-height: 26px;
    font-family: "Liberation Sans", sans-serif;
    font-weight: bold;
    font-size: 18px;
}

.pageno {
    font-style: italic;
    font-size: 17px;
    line-height: 19px;
    padding-right: 3px;
    margin-bottom: -2px;
}

/* Score table */
.scores {
    width: 1380px;
    table-layout: fixed;
    border-collapse: collapse;
    font-size: 16.7px;
}

.c-tt { width: 35px; }
.c-school { width: 260px; }
.c-id { width: 132px; }
.c-name { width: 340px; }
.c-dob { width: 90px; }
.c-sex { width: 52px; }
.c-class { width: 61px; }
.c-teacher { width: 202px; }
.c-score { width: 56px; }
.c-prize { width: 58px; }
.c-sub { width: 94px; }

.scores th,
.scores td {
    border: 2px solid #111;
    padding: 0;
    text-align: center;
}

.scores th {
    vertical-align: top;
    padding-top: 5px;
    line-height: 26px;
    font-size: 16.8px;
}

.scores .h1 th {
    border-top: 1px solid #555;
}

.scores tr > :first-child {
    border-left: 1px solid #555;
}

.scores tr > :last-child {
    border-right: 1px solid #555;
}

.scores .h2 > :first-child {
    border-left: 2px solid #111;
}

.scores .h2 > :last-child {
    border-right: 2px solid #111;
}

.scores tbody tr:last-child td {
    border-bottom: 1px solid #555;
}

.scores .th-mid {
    padding-top: 0;
    line-height: 22px;
    vertical-align: middle;
}

.h1 {
    height: 32px;
}

.h2 {
    height: 25px;
}

.scores tbody tr {
    height: 45px;
}

.scores tbody tr:nth-child(5),
.scores tbody tr:nth-child(9) {
    height: 44px;
}

.scores tbody tr:nth-child(7) {
    height: 46px;
}

.scores .l {
    text-align: left;
    padding-left: 3px;
}

.scores .sbd {
    vertical-align: top;
    line-height: 23px;
}

.fullname {
    display: flex;
}

.fullname span:first-child {
    width: 246px;
}

/* Document footer */
.doc-foot {
    display: grid;
    grid-template-columns: 415px 548px 1fr;
    width: 1380px;
    padding-left: 4px;
    box-sizing: border-box;
    margin-top: 7px;
    font-size: 18.3px;
    line-height: 21px;
}

.reader {
    padding-left: 15px;
    font-weight: bold;
}

.foot-right {
    text-align: center;
    padding-right: 75px;
    font-style: italic;
}

.foot-date {
    font-size: 20.3px;
}

.foot-sign {
    font-weight: bold;
    font-style: normal;
    margin-top: 14px;
}

/* Scrollbars */
.vscroll {
    width: 15px;
    flex: none;
    display: flex;
    flex-direction: column;
    align-items: center;
    background: #f0f0f0;
}

.v-split {
    width: 15px;
    height: 6px;
    margin-top: 1px;
    background: #cfcfcf;
}

.v-up {
    margin-top: 6px;
}

.v-thumb {
    width: 13px;
    height: 102px;
    margin-top: 503px;
    background: #c8c8c8;
}

.hscroll {
    height: 11px;
    flex: none;
    display: flex;
    align-items: center;
}

.corner {
    width: 7px;
    height: 11px;
    margin-left: 36px;
    margin-right: 3px;
    border-left: 1px solid #999;
    border-top: 1px solid #999;
    box-sizing: border-box;
}

.h-thumb {
    width: 1522px;
    height: 11px;
    margin: 0 4px 0 4px;
    background: #c8c8c8;
}

.v-down {
    margin-left: 6px;
}

/* Status bar */
.status {
    height: 25px;
    flex: none;
    display: flex;
    align-items: center;
    border-bottom: 1px solid #ddd;
    box-sizing: border-box;
}

.pager {
    display: flex;
    align-items: center;
    margin-left: 643px;
}

.pager svg:nth-child(2) { margin-left: 9px; }
.pager svg:nth-child(5) { margin-left: 11px; }
.pager svg:nth-child(6) { margin-left: 9px; }
.pager svg:nth-child(7) { margin-left: 5px; }

.pagebox {
    width: 96px;
    height: 16px;
    margin: 0 6px 0 9px;
    box-sizing: border-box;
    padding: 0 4px;
    background: #fff;
    border: 1px solid #d0d0d0;
    display: flex;
    align-items: center;
    justify-content: space-between;
    color: #333;
    font-size: 10.5px;
}

.viewctl {
    margin-left: auto;
    display: flex;
    align-items: center;
    padding-right: 15px;
}

.vb {
    width: 20px;
    height: 20px;
    margin-right: 2px;
    display: flex;
    align-items: center;
    justify-content: center;
}

.vb-on {
    background: #cfe0f5;
}

.zoomval {
    margin-left: 8px;
    width: 52px;
    color: #666;
    font-size: 11px;
}

.viewctl .caret {
    margin-right: 5px;
}

.slider {
    width: 76px;
    height: 1px;
    margin: 0 4px;
    background: #555;
    position: relative;
}

.tick {
    position: absolute;
    left: 37px;
    top: -3px;
    width: 1px;
    height: 7px;
    background: #555;
}

.thumb {
    position: absolute;
    left: 41px;
    top: -4px;
    width: 3px;
    height: 9px;
    background: #333;
}

/* Taskbar */
.taskbar {
    height: 33px;
    flex: none;
    display: flex;
    background: linear-gradient(90deg, #4a3d30 280px, #3c3a32 400px, #2b3533 520px, #27302f 1150px, #4b4034 1270px, #2e3230 1400px, #262b2c 1600px);
    color: #e8e8e8;
}

.start {
    width: 40px;
    background: #0d0d0d;
    display: flex;
    align-items: center;
    justify-content: center;
}

.search {
    width: 240px;
    background: #f2f2f2;
    display: flex;
    align-items: center;
    padding-left: 10px;
    box-sizing: border-box;
    color: #333;
    font-family: "Open Sans", sans-serif;
    font-size: 11.8px;
    overflow: hidden;
}

.search span {
    margin-left: 7px;
}

.search-art {
    margin-left: auto;
}

.tb-icons {
    display: flex;
    margin-left: -1px;
}

.tb {
    width: 41px;
    display: flex;
    align-items: center;
    justify-content: center;
    box-sizing: border-box;
    border-bottom: 2px solid transparent;
}

.tb + .tb-run:nth-child(2) {
    margin-left: 1px;
}

.tb-run {
    border-bottom-color: #7eb4dc;
}

.tb-active {
    background: #4a5150;
}

.tray {
    margin-left: auto;
    display: flex;
    align-items: center;
    padding-right: 20px;
}

.t-cam { margin-left: 7px; }
.t-net { margin-left: 4px; }
.t-spk { margin-left: 3px; }

.lang {
    margin-left: 9px;
    width: 24px;
    font-size: 10px;
    line-height: 14px;
}

.clock {
    margin-left: 5px;
    width: 50px;
    font-size: 10px;
    line-height: 14px;
    text-align: center;
}

.notif {
    margin-left: 13px;
}
```
